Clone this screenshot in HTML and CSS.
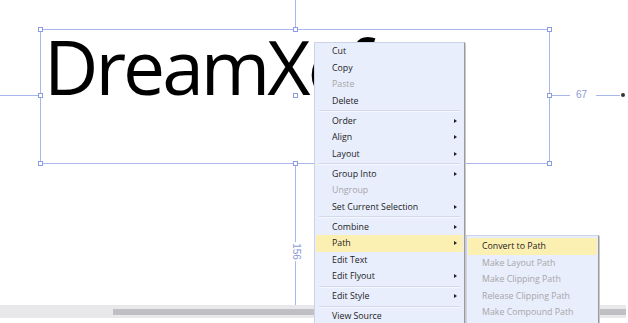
FILE: index.html
```html
<!DOCTYPE html>
<html lang="en">
<head>
  <meta charset="UTF-8">
  <title>Canvas context menu</title>
  <link rel="stylesheet" href="styles.css">
</head>
<body>
  <div class="canvas">
    <div class="big-text">DreamXef</div>

    <!-- guides -->
    <div class="guide guide-v guide-top"></div>
    <div class="guide guide-v guide-bottom"></div>
    <div class="guide guide-h guide-left"></div>
    <div class="guide guide-h guide-right1"></div>
    <div class="guide guide-h guide-right2"></div>
    <div class="dim dim-v">156</div>
    <div class="dim dim-h">67</div>
    <div class="anchor-dot"></div>

    <!-- selection -->
    <div class="sel-box"></div>
    <div class="handle" style="left:38px;top:27px"></div>
    <div class="handle" style="left:293px;top:27px"></div>
    <div class="handle" style="left:547px;top:27px"></div>
    <div class="handle" style="left:38px;top:93px"></div>
    <div class="handle" style="left:293px;top:93px"></div>
    <div class="handle" style="left:547px;top:93px"></div>
    <div class="handle" style="left:38px;top:161px"></div>
    <div class="handle" style="left:293px;top:161px"></div>
    <div class="handle" style="left:547px;top:161px"></div>

    <div class="hscroll"><div class="hscroll-thumb"></div></div>

    <ul class="menu main-menu">
      <li class="item">Cut</li>
      <li class="item">Copy</li>
      <li class="item disabled">Paste</li>
      <li class="item">Delete</li>
      <li class="sep"></li>
      <li class="item sub">Order</li>
      <li class="item sub">Align</li>
      <li class="item sub">Layout</li>
      <li class="sep"></li>
      <li class="item sub">Group Into</li>
      <li class="item disabled">Ungroup</li>
      <li class="item sub">Set Current Selection</li>
      <li class="sep"></li>
      <li class="item sub">Combine</li>
      <li class="item sub active">Path</li>
      <li class="item">Edit Text</li>
      <li class="item sub">Edit Flyout</li>
      <li class="sep"></li>
      <li class="item sub">Edit Style</li>
      <li class="sep"></li>
      <li class="item">View Source</li>
    </ul>

    <ul class="menu sub-menu">
      <li class="item active">Convert to Path</li>
      <li class="item disabled">Make Layout Path</li>
      <li class="item disabled">Make Clipping Path</li>
      <li class="item disabled">Release Clipping Path</li>
      <li class="item disabled">Make Compound Path</li>
    </ul>
  </div>
</body>
</html>
```

FILE: styles.css
```css
body {
  margin: 0;
  background: #fff;
  font-family: "Open Sans", "Noto Sans", sans-serif;
}
.canvas {
  position: relative;
  width: 628px;
  height: 323px;
  overflow: hidden;
  background: #fff;
}
.big-text {
  position: absolute;
  left: 44px;
  top: 16px;
  font-size: 75px;
  line-height: 100px;
  letter-spacing: -3px;
  color: #000;
  white-space: nowrap;
}
.guide {
  position: absolute;
  background: #a9b6ec;
}
.guide-v { width: 1px; left: 295px; }
.guide-top { top: 0; height: 27px; }
.guide-bottom { top: 165px; height: 140px; }
.guide-h { height: 1px; top: 95px; }
.guide-left { left: 0; width: 38px; }
.guide-right1 { left: 551px; width: 19px; }
.guide-right2 { left: 596px; width: 24px; }
.dim {
  position: absolute;
  font-family: "Liberation Sans", Arial, sans-serif;
  font-size: 10px;
  color: #8c9ad8;
  background: #fff;
}
.dim-h {
  left: 576px;
  top: 89px;
}
.dim-v {
  left: 287px;
  top: 246px;
  transform: rotate(90deg);
  padding: 0 1px;
}
.anchor-dot {
  position: absolute;
  left: 621px;
  top: 93px;
  width: 4px;
  height: 4px;
  border-radius: 50%;
  background: #333;
}
.sel-box {
  position: absolute;
  left: 40px;
  top: 29px;
  width: 508px;
  height: 133px;
  border: 1px solid #a9b6ec;
}
.handle {
  position: absolute;
  width: 3px;
  height: 3px;
  border: 1px solid #8c9ce0;
  background: #fff;
}
.hscroll {
  position: absolute;
  left: 0;
  top: 305px;
  width: 626px;
  height: 13px;
  background: #e8e8ea;
}
.hscroll-thumb {
  margin: 4px 0 0 113px;
  height: 6px;
  background: #c0c0c4;
}
.menu {
  position: absolute;
  margin: 0;
  padding: 0;
  list-style: none;
  background: #e9eefc;
  border: 1px solid #cdd3e6;
  border-right-color: #9a9a9a;
  box-shadow: 1px 1px 0 #c9c9c9;
  font-size: 8.8px;
  color: #1c1c1c;
}
.main-menu {
  left: 314px;
  top: 42px;
  width: 149px;
  height: 300px;
}
.sub-menu {
  left: 466px;
  top: 235px;
  width: 131px;
  height: 100px;
  padding-top: 2px;
}
.item {
  position: relative;
  height: 16.5px;
  line-height: 16.5px;
  padding-left: 16px;
  margin: 0 1px;
  white-space: nowrap;
}
.sub-menu .item {
  height: 16.6px;
  line-height: 16.6px;
  padding-left: 14px;
}
.item.disabled {
  color: #a6a6a8;
}
.item.active {
  background: #fcefb2;
}
.item.sub::after {
  content: "";
  position: absolute;
  right: 6px;
  top: 6px;
  border-left: 3px solid #222;
  border-top: 2.5px solid transparent;
  border-bottom: 2.5px solid transparent;
}
.sep {
  height: 1px;
  margin: 1px 4px 0.5px 4px;
  background: #d3d8ea;
  border-bottom: 1px solid #f6f8ff;
}
```
